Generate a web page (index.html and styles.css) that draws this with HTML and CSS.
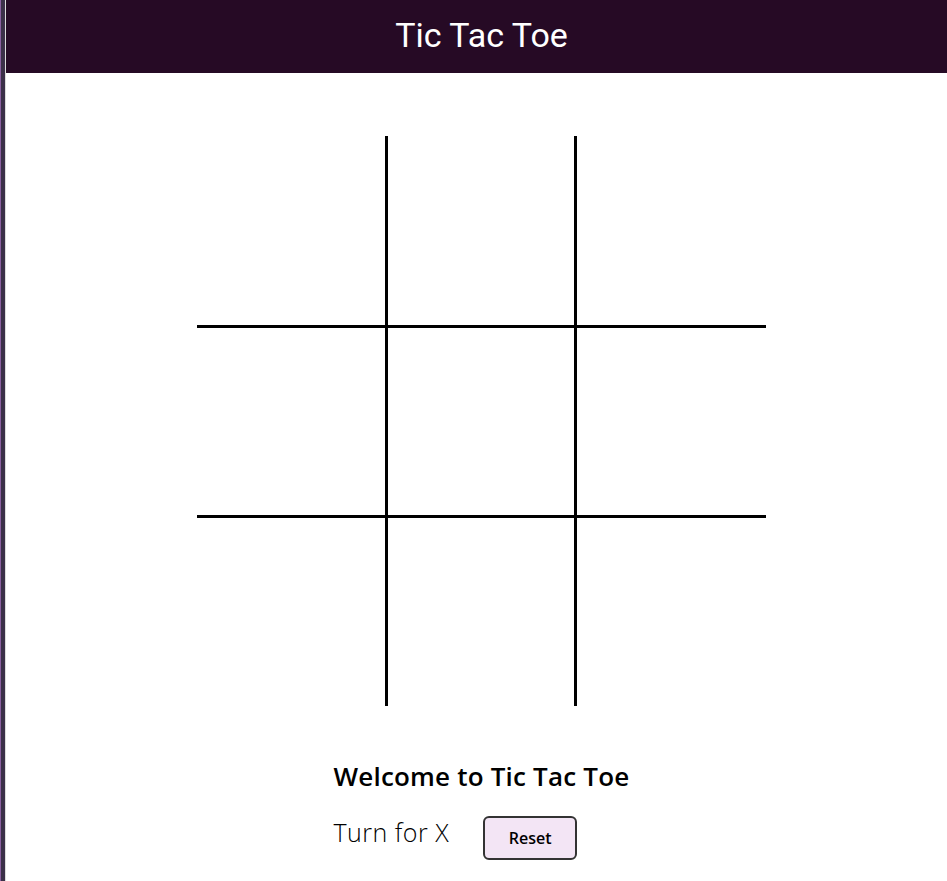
FILE: index.html
```html
<!DOCTYPE html>
<html lang="en">
<head>
<meta charset="utf-8">
<title>Tic Tac Toe</title>
<link rel="stylesheet" href="styles.css">
</head>
<body>
<div class="desk-edge"></div>
<div class="app">
  <header class="topbar">
    <h1 class="title">Tic Tac Toe</h1>
  </header>
  <main class="main">
    <div class="board">
      <div class="cell"></div><div class="cell"></div><div class="cell"></div>
      <div class="cell"></div><div class="cell"></div><div class="cell"></div>
      <div class="cell"></div><div class="cell"></div><div class="cell"></div>
    </div>
    <section class="info">
      <h2 class="welcome">Welcome to Tic Tac Toe</h2>
      <div class="status-row">
        <span class="turn">Turn for X</span>
        <button class="reset" type="button">Reset</button>
      </div>
    </section>
  </main>
</div>
</body>
</html>
```
FILE: styles.css
```css
html, body {
  margin: 0;
  padding: 0;
  height: 100%;
  overflow: hidden;
  background: #ffffff;
}
body {
  display: flex;
  flex-direction: row;
}
.desk-edge {
  flex: none;
  width: 5px;
  background: linear-gradient(to right, #8a5fa0 0, #8a5fa0 1px, #3b3048 1px, #3b3048 100%);
}
.app {
  flex: none;
  width: 951px;
  border-left: 1px solid #dcdcdc;
  background: #ffffff;
}
.topbar {
  height: 73px;
  box-sizing: border-box;
  padding-bottom: 4px;
  background: #260a25;
  display: flex;
  align-items: center;
  justify-content: center;
}
.title {
  margin: 0;
  font-family: Roboto, "Liberation Sans", sans-serif;
  font-weight: 400;
  font-size: 34px;
  line-height: 40px;
  color: #ffffff;
}
.main {
  display: flex;
  flex-direction: column;
  align-items: center;
}
.board {
  margin-top: 63px;
  display: grid;
  grid-template-columns: 188px 186px 189px;
  grid-template-rows: 189px 187px 188px;
  gap: 3px;
  background: #000000;
}
.cell {
  background: #ffffff;
}
.info {
  margin-top: 55px;
  display: flex;
  flex-direction: column;
  align-items: flex-start;
}
.welcome {
  margin: 0;
  font-family: "Open Sans", "Noto Sans", sans-serif;
  font-weight: 600;
  font-size: 26px;
  line-height: 30px;
  letter-spacing: 0.2px;
  color: #000000;
}
.status-row {
  margin-top: 25px;
  display: flex;
  align-items: flex-start;
  gap: 34px;
}
.turn {
  padding-top: 1px;
  font-family: "Open Sans", "Noto Sans", sans-serif;
  font-weight: 300;
  font-size: 25px;
  line-height: 30px;
  letter-spacing: 0.5px;
  color: #000000;
}
.reset {
  width: 94px;
  height: 44px;
  box-sizing: border-box;
  border: 2px solid #333333;
  border-radius: 6px;
  background: #f3e5f5;
  font-family: "Open Sans", "Noto Sans", sans-serif;
  font-weight: 600;
  font-size: 16px;
  color: #000000;
  padding: 0;
}
```
